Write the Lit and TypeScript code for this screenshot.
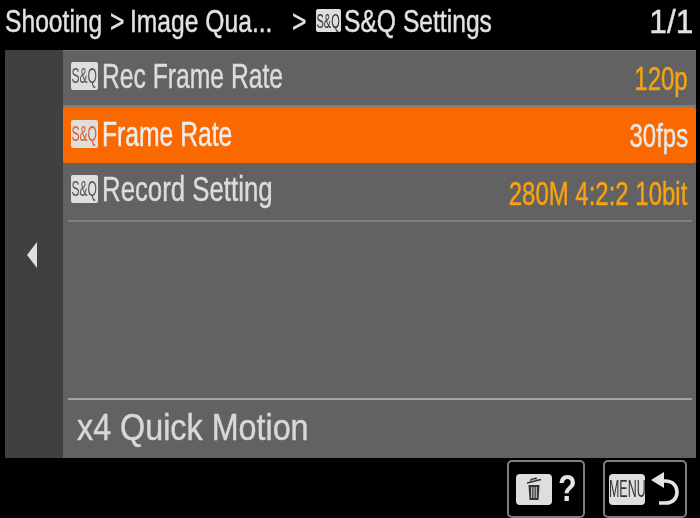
import { LitElement, html, css } from "lit";
import { customElement } from "lit/decorators.js";

@customElement("app-root")
export class AppRoot extends LitElement {
  static styles = css`
    :host { display: block; width: 700px; height: 518px; overflow: hidden; background: #000;
      font-family: "Liberation Sans", Arial, sans-serif; color: #dcdcdc; }
    .page { display: flex; flex-direction: column; width: 700px; height: 518px; filter: blur(0.45px); }
    .narrow { display: inline-block; white-space: nowrap; transform-origin: left center; transform: scaleX(0.705); -webkit-text-stroke: 0.45px currentColor; }
    .narrow.right { transform-origin: right center; }
    header { height: 50px; flex: none; display: flex; align-items: center; font-size: 32px; color: #e2e2e2; line-height: 40px; padding: 0 0 9px 5px; box-sizing: border-box; }
    header .narrow { transform: scaleX(0.77); }
    .c1 { width: 105px; }
    .gt1 { width: 20px; }
    .c2 { width: 162px; }
    .gt2 { width: 24px; }
    .c3 { flex: 1; display: flex; align-items: center; }
    .c3 .badge { margin-right: 3px; }
    .c4 { width: 55px; margin-right: 7px; text-align: right; font-size: 34px; }
    header .c4 .narrow { transform: scaleX(0.93); }
    .panel { height: 408px; flex: none; margin: 0 4px 0 5px; display: flex; background: #626262; border-top: 1px solid #777; box-sizing: border-box; }
    .side { width: 58px; flex: none; background: #404040; display: flex; align-items: center; justify-content: center; padding-top: 2px; margin-top: -1px; box-sizing: border-box; }
    .side svg { margin-right: 5px; }
    .main { flex: 1; display: flex; flex-direction: column; min-width: 0; }
    .row { height: 56px; flex: none; display: flex; align-items: center; justify-content: space-between; padding: 0 8px; box-sizing: border-box; font-size: 35px; }
    .row.first { border-bottom: 2px solid #7d7d7d; }
    .row.sel { background: #fa6800; border-radius: 3px; color: #ededed; }
    .row.sel .label { margin-bottom: 3px; }
    .row.last { border-bottom: 2px solid #808080; height: 59px; margin: 0 4px 0 5px; padding: 0 5px 0 3px; }
    .row.last .label .narrow { transform: scaleX(0.737); }
    .row.last .value { padding-top: 4px; }
    .label { display: flex; align-items: center; gap: 4px; margin-bottom: 5px; }
    .label .badge { flex: none; }
    .value { color: #f9a311; width: 1px; display: flex; justify-content: flex-end; font-size: 34px; }
    .value .narrow { transform: scaleX(0.705); }
    .sel .value { color: #e8e8e8; }
    .badge { display: flex; align-items: center; justify-content: center; width: 27px; height: 28px; background: #dedede; border-radius: 2px; color: #555; font-size: 22px; overflow: hidden; }
    .sel .badge { color: #d8602a; }
    .badge.sm { width: 25px; height: 23px; font-size: 20px; color: #333; }
    .badge span { transform: scaleX(0.55); transform-origin: center; white-space: nowrap; }
    .spacer { flex: 1; }
    .note { height: 60px; flex: none; margin-left: 5px; margin-right: 4px; border-top: 2px solid #a4a4a4; display: flex; align-items: center; padding: 0 0 3px 9px; font-size: 37px; color: #d8d8d8; box-sizing: border-box; }
    .note .narrow { transform: scaleX(0.873); }
    footer { flex: 1; display: flex; justify-content: flex-end; gap: 18px; padding: 2px 13px 0 0; box-sizing: border-box; }
    .btn { border: 2px solid #7f7f7f; border-radius: 5px; display: flex; align-items: center; box-sizing: border-box; height: 58px; }
    .b1 { width: 78px; padding-left: 7px; gap: 6px; }
    .b2 { width: 84px; padding-left: 4px; gap: 6px; }
    .key { width: 36px; height: 31px; background: #dedede; border-radius: 4px; display: flex; align-items: center; justify-content: center; color: #333; font-size: 24px; flex: none; }
    .key span { display: inline-block; transform: scaleX(0.52); white-space: nowrap; }
    .q { font-size: 36px; font-weight: 700; color: #e4e4e4; display: inline-block; transform: scaleX(0.85); line-height: 1; transform-origin: left center; }
  `;

  private badge(sm = false) {
    return html`<div class="badge ${sm ? "sm" : ""}"><span>S&amp;Q</span></div>`;
  }

  private row(label: string, value: string, cls = "") {
    return html`<div class="row ${cls}">
      <div class="label">${this.badge()}<span class="narrow">${label}</span></div>
      <div class="value"><span class="narrow right">${value}</span></div>
    </div>`;
  }

  render() {
    return html`<div class="page">
      <header>
        <div class="c1"><span class="narrow">Shooting</span></div>
        <div class="gt1"><span class="narrow">&gt;</span></div>
        <div class="c2"><span class="narrow">Image Qua...</span></div>
        <div class="gt2"><span class="narrow">&gt;</span></div>
        <div class="c3">${this.badge(true)}<span class="narrow">S&amp;Q Settings</span></div>
        <div class="c4"><span class="narrow right">1/1</span></div>
      </header>
      <section class="panel">
        <div class="side">
          <svg width="10" height="26" viewBox="0 0 10 26"><path d="M10 0 L0 13 L10 26 Z" fill="#e0e0e0"/></svg>
        </div>
        <div class="main">
          ${this.row("Rec Frame Rate", "120p", "first")}
          ${this.row("Frame Rate", "30fps", "sel")}
          ${this.row("Record Setting", "280M 4:2:2 10bit", "last")}
          <div class="spacer"></div>
          <div class="note"><span class="narrow">x4 Quick Motion</span></div>
        </div>
      </section>
      <footer>
        <div class="btn b1">
          <div class="key">
            <svg width="20" height="26" viewBox="0 0 20 26" fill="none" stroke="#333">
              <path d="M3 7 L17 3.5" stroke-width="1.8"/>
              <path d="M7 5 L7 3.5 L12 2.2 L12 3.8" stroke-width="1.3"/>
              <path d="M4.5 9 H15.5 L14.5 24 H5.5 Z" fill="#333" stroke="none"/>
              <path d="M7.7 11 V22 M10 11 V22 M12.3 11 V22" stroke="#dedede" stroke-width="1"/>
            </svg>
          </div>
          <span class="q">?</span>
        </div>
        <div class="btn b2">
          <div class="key"><span>MENU</span></div>
          <svg width="28" height="34" viewBox="0 0 28 34" fill="none">
            <path d="M0 8 L13 0 V16 Z" fill="#e4e4e4"/>
            <path d="M11 9 H14 C22 9 26 14 26 20 C26 27 21 31 15 31 H8" stroke="#e4e4e4" stroke-width="3.6"/>
          </svg>
        </div>
      </footer>
    </div>`;
  }
}
